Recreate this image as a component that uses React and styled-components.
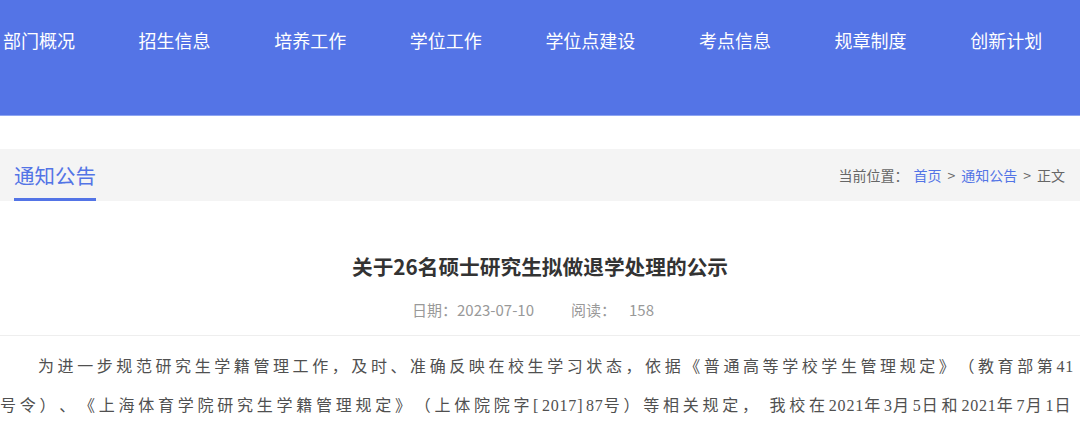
import styled, { createGlobalStyle } from "styled-components";

const GlobalStyle = createGlobalStyle`
  body {
    margin: 0;
    background: #ffffff;
    font-family: "Noto Sans CJK SC", "Noto Sans", sans-serif;
    overflow: hidden;
  }
`;

const navItems = [
  "部门概况",
  "招生信息",
  "培养工作",
  "学位工作",
  "学位点建设",
  "考点信息",
  "规章制度",
  "创新计划",
];

export default function App() {
  return (
    <>
      <GlobalStyle />
      <Header>
        <Nav>
          {navItems.map((item) => (
            <NavItem key={item}>{item}</NavItem>
          ))}
        </Nav>
      </Header>
      <TitleBar>
        <Tab>通知公告</Tab>
        <Breadcrumb>
          当前位置：
          <Crumb $link>首页</Crumb>
          <Sep>&gt;</Sep>
          <Crumb $link>通知公告</Crumb>
          <Sep>&gt;</Sep>
          <Crumb>正文</Crumb>
        </Breadcrumb>
      </TitleBar>
      <ArticleHead>
        <Title>关于26名硕士研究生拟做退学处理的公示</Title>
        <Meta>
          <span>日期：2023-07-10</span>
          <MetaGap>阅读：</MetaGap>
          <MetaCount>158</MetaCount>
        </Meta>
      </ArticleHead>
      <Body>
        为进一步规范研究生学籍管理工作，及时、准确反映在校生学习状态，依据《普通高等学校学生管理规定》（教育部第<Num>41</Num>号令）、《上海体育学院研究生学籍管理规定》（上体院院字[<Num>2017</Num>]<Num>87</Num>号）等相关规定，
        我校在<Num>2021</Num>年<Num>3</Num>月<Num>5</Num>日和<Num>2021</Num>年<Num>7</Num>月<Num>1</Num>日
      </Body>
    </>
  );
}

const Header = styled.header`
  height: 115px;
  background: #5474e6;
  border-bottom: 1px solid #8ea5f1;
  margin-bottom: 33px;
`;

const Nav = styled.nav`
  display: flex;
  gap: 63.6px;
  padding: 29px 0 0 3px;
`;

const NavItem = styled.a`
  color: #ffffff;
  font-size: 18px;
  line-height: 22px;
  white-space: nowrap;
`;

const TitleBar = styled.div`
  display: flex;
  justify-content: space-between;
  align-items: stretch;
  height: 52px;
  background: #f4f4f4;
`;

const Tab = styled.div`
  display: flex;
  align-items: center;
  margin-left: 14px;
  padding-top: 3px;
  font-size: 20.5px;
  color: #5374e6;
  border-bottom: 3px solid #5374e6;
`;

const Breadcrumb = styled.div`
  display: flex;
  align-items: center;
  padding-right: 15px;
  font-size: 14px;
  color: #666666;
`;

const Crumb = styled.span`
  color: ${(p) => (p.$link ? "#5374e6" : "#666666")};
  &:first-of-type {
    margin-left: 5px;
  }
`;

const Sep = styled.span`
  margin: 0 6px;
  color: #666666;
`;

const ArticleHead = styled.div`
  display: flex;
  flex-direction: column;
  align-items: center;
  padding: 50px 0 15px;
  border-bottom: 1px solid #eeeeee;
`;

const Title = styled.h1`
  margin: 0;
  font-size: 20.7px;
  line-height: 30px;
  font-weight: 700;
  color: #333333;
`;

const Meta = styled.div`
  display: flex;
  margin: 19px 14px 0 0;
  font-size: 15px;
  line-height: 20px;
  color: #999999;
`;

const MetaGap = styled.span`
  margin-left: 37px;
`;

const MetaCount = styled.span`
  margin-left: 13px;
`;

const Body = styled.p`
  margin: 11px 6px 0 0;
  font-family: "Liberation Serif", "Noto Sans CJK SC", serif;
  font-size: 16px;
  line-height: 39px;
  letter-spacing: 3.5px;
  text-indent: 38px;
  text-align: justify;
  text-align-last: justify;
  text-spacing-trim: space-all;
  color: #505050;
`;

const Num = styled.span`
  letter-spacing: 0.8px;
`;
